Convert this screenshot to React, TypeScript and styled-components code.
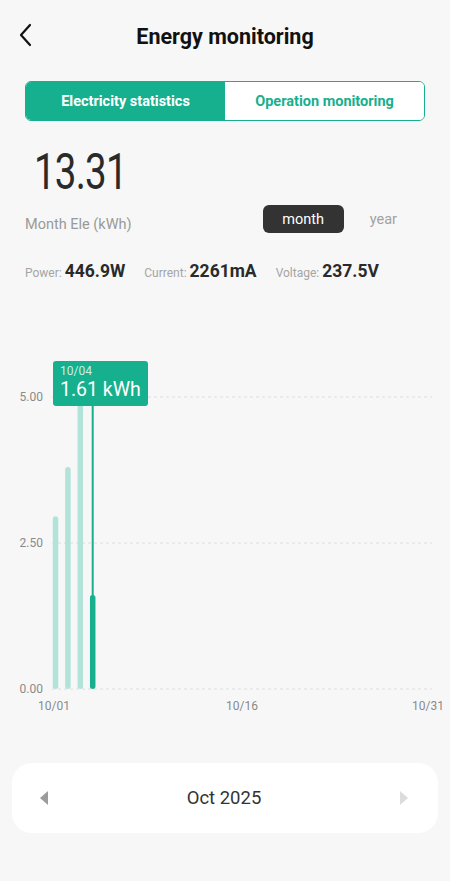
import React from "react";
import styled, { createGlobalStyle } from "styled-components";

const TEAL = "#16b08e";
const TEAL_LIGHT = "#b2e3d8";

const GlobalStyle = createGlobalStyle`
  html, body {
    margin: 0;
    padding: 0;
    background: #f7f7f7;
    font-family: Roboto, "Noto Sans", "Liberation Sans", sans-serif;
  }
`;

const DAYS = [2.96, 3.8, 4.94, 1.61];
const SELECTED = 3;

const Chart = () => {
  const zeroY = 348;
  const perUnit = 58.4;
  const x0 = 55.5;
  const step = 12.4;
  const grid = [
    { v: "5.00", y: zeroY - 5 * perUnit },
    { v: "2.50", y: zeroY - 2.5 * perUnit },
    { v: "0.00", y: zeroY },
  ];
  return (
    <svg width="450" height="380" viewBox="0 0 450 380">
      {grid.map((g) => (
        <g key={g.v}>
          <line x1="52" x2="432" y1={g.y} y2={g.y} stroke="#dedede" strokeWidth="1" strokeDasharray="3 3" />
          <text x="43" y={g.y + 4} textAnchor="end" fontSize="12" fill="#8a8a8a" fontFamily="Roboto, sans-serif">
            {g.v}
          </text>
        </g>
      ))}
      {DAYS.map((v, i) => {
        const x = x0 + i * step;
        const top = zeroY - v * perUnit;
        return (
          <rect
            key={i}
            x={x - 2.75}
            y={top}
            width="5.5"
            height={zeroY - top}
            rx="2.75"
            fill={i === SELECTED ? TEAL : TEAL_LIGHT}
          />
        );
      })}
      <line x1={x0 + SELECTED * step} x2={x0 + SELECTED * step} y1="64" y2={zeroY - 1.61 * perUnit + 2} stroke={TEAL} strokeWidth="2" />
      {[
        { t: "10/01", x: 54 },
        { t: "10/16", x: 242 },
        { t: "10/31", x: 428 },
      ].map((l) => (
        <text key={l.t} x={l.x} y="369" textAnchor="middle" fontSize="12" fill="#8a8a8a" fontFamily="Roboto, sans-serif">
          {l.t}
        </text>
      ))}
    </svg>
  );
};

const App = () => {
  return (
    <Page>
      <GlobalStyle />
      <Header>
        <BackButton aria-label="back">
          <svg width="14" height="24" viewBox="0 0 14 24">
            <path d="M12 2 L3 12 L12 22" fill="none" stroke="#111" strokeWidth="2.2" strokeLinecap="round" strokeLinejoin="round" />
          </svg>
        </BackButton>
        <Title>Energy monitoring</Title>
      </Header>

      <Tabs>
        <Tab $active>Electricity statistics</Tab>
        <Tab>Operation monitoring</Tab>
      </Tabs>

      <Summary>
        <BigValue>13.31</BigValue>
        <SummaryRow>
          <Caption>Month Ele (kWh)</Caption>
          <PeriodSwitch>
            <PeriodButton $active>month</PeriodButton>
            <PeriodButton>year</PeriodButton>
          </PeriodSwitch>
        </SummaryRow>
      </Summary>

      <Stats>
        <Stat>
          <StatLabel>Power:</StatLabel>
          <StatValue>446.9W</StatValue>
        </Stat>
        <Stat>
          <StatLabel>Current:</StatLabel>
          <StatValue>2261mA</StatValue>
        </Stat>
        <Stat>
          <StatLabel>Voltage:</StatLabel>
          <StatValue>237.5V</StatValue>
        </Stat>
      </Stats>

      <ChartArea>
        <Chart />
        <Tooltip>
          <TooltipDate>10/04</TooltipDate>
          <TooltipValue>1.61 kWh</TooltipValue>
        </Tooltip>
      </ChartArea>

      <MonthCard>
        <Arrow $dir="left" $dim={false} />
        <MonthLabel>Oct 2025</MonthLabel>
        <Arrow $dir="right" $dim />
      </MonthCard>
    </Page>
  );
};

export default App;

const Page = styled.div`
  width: 450px;
  min-height: 881px;
  background: #f7f7f7;
  display: flex;
  flex-direction: column;
`;

const Header = styled.header`
  position: relative;
  height: 72px;
  display: flex;
  align-items: center;
  justify-content: center;
`;

const BackButton = styled.button`
  position: absolute;
  left: 14px;
  top: 23px;
  border: none;
  background: none;
  padding: 0 4px;
  display: flex;
`;

const Title = styled.h1`
  margin: 0;
  font-size: 21.5px;
  font-weight: 700;
  color: #111;
`;

const Tabs = styled.div`
  margin: 9px 25px 0;
  height: 38px;
  display: flex;
  border: 1.5px solid ${TEAL};
  border-radius: 6px;
  overflow: hidden;
  background: #fff;
`;

const Tab = styled.div<{ $active?: boolean }>`
  flex: 1;
  display: flex;
  align-items: center;
  justify-content: center;
  font-size: 14.5px;
  font-weight: 700;
  background: ${(p) => (p.$active ? TEAL : "#fff")};
  color: ${(p) => (p.$active ? "#fff" : TEAL)};
`;

const Summary = styled.div`
  padding: 26px 25px 0;
`;

const BigValue = styled.div`
  font-size: 50px;
  line-height: 50px;
  color: #2a2a2a;
  margin-left: 9px;
  letter-spacing: -1px;
  transform: scaleX(0.77);
  transform-origin: left center;
`;

const SummaryRow = styled.div`
  display: flex;
  align-items: center;
  justify-content: space-between;
  margin-top: 8px;
`;

const Caption = styled.span`
  font-size: 14.5px;
  color: #9a9a9a;
  margin-top: 10px;
`;

const PeriodSwitch = styled.div`
  display: flex;
  align-items: center;
  gap: 8px;
  margin-right: 18px;
`;

const PeriodButton = styled.div<{ $active?: boolean }>`
  width: ${(p) => (p.$active ? "81px" : "auto")};
  height: 28px;
  border-radius: 6px;
  display: flex;
  align-items: center;
  justify-content: center;
  padding: ${(p) => (p.$active ? "0" : "0 10px 0 18px")};
  font-size: 14.5px;
  background: ${(p) => (p.$active ? "#333" : "transparent")};
  color: ${(p) => (p.$active ? "#fff" : "#a2a2a2")};
`;

const Stats = styled.div`
  display: flex;
  align-items: baseline;
  gap: 19px;
  padding: 28px 25px 0;
`;

const Stat = styled.div`
  display: flex;
  align-items: baseline;
  gap: 3px;
`;

const StatLabel = styled.span`
  font-size: 12px;
  color: #a5a5a5;
`;

const StatValue = styled.span`
  font-size: 17.5px;
  font-weight: 700;
  color: #2a2a2a;
`;

const ChartArea = styled.div`
  position: relative;
  margin-top: 60px;
  height: 380px;
  svg {
    display: block;
  }
`;

const Tooltip = styled.div`
  position: absolute;
  left: 53px;
  top: 20px;
  width: 95px;
  height: 45px;
  box-sizing: border-box;
  padding: 3px 0 0 7px;
  background: ${TEAL};
  border-radius: 3px;
  color: #fff;
`;

const TooltipDate = styled.div`
  font-size: 12px;
  line-height: 14px;
  color: #c9efe5;
`;

const TooltipValue = styled.div`
  font-size: 19.5px;
  line-height: 24px;
`;

const MonthCard = styled.div`
  margin: 42px 12px 0;
  height: 70px;
  background: #fff;
  border-radius: 20px;
  display: flex;
  align-items: center;
  justify-content: space-between;
  padding: 0 30px 0 28px;
`;

const Arrow = styled.div<{ $dir: "left" | "right"; $dim: boolean }>`
  width: 0;
  height: 0;
  border-top: 7px solid transparent;
  border-bottom: 7px solid transparent;
  ${(p) =>
    p.$dir === "left"
      ? `border-right: 8px solid ${p.$dim ? "#dcdcdc" : "#9c9c9c"};`
      : `border-left: 8px solid ${p.$dim ? "#dcdcdc" : "#9c9c9c"};`}
`;

const MonthLabel = styled.span`
  font-size: 18.5px;
  color: #333;
`;
